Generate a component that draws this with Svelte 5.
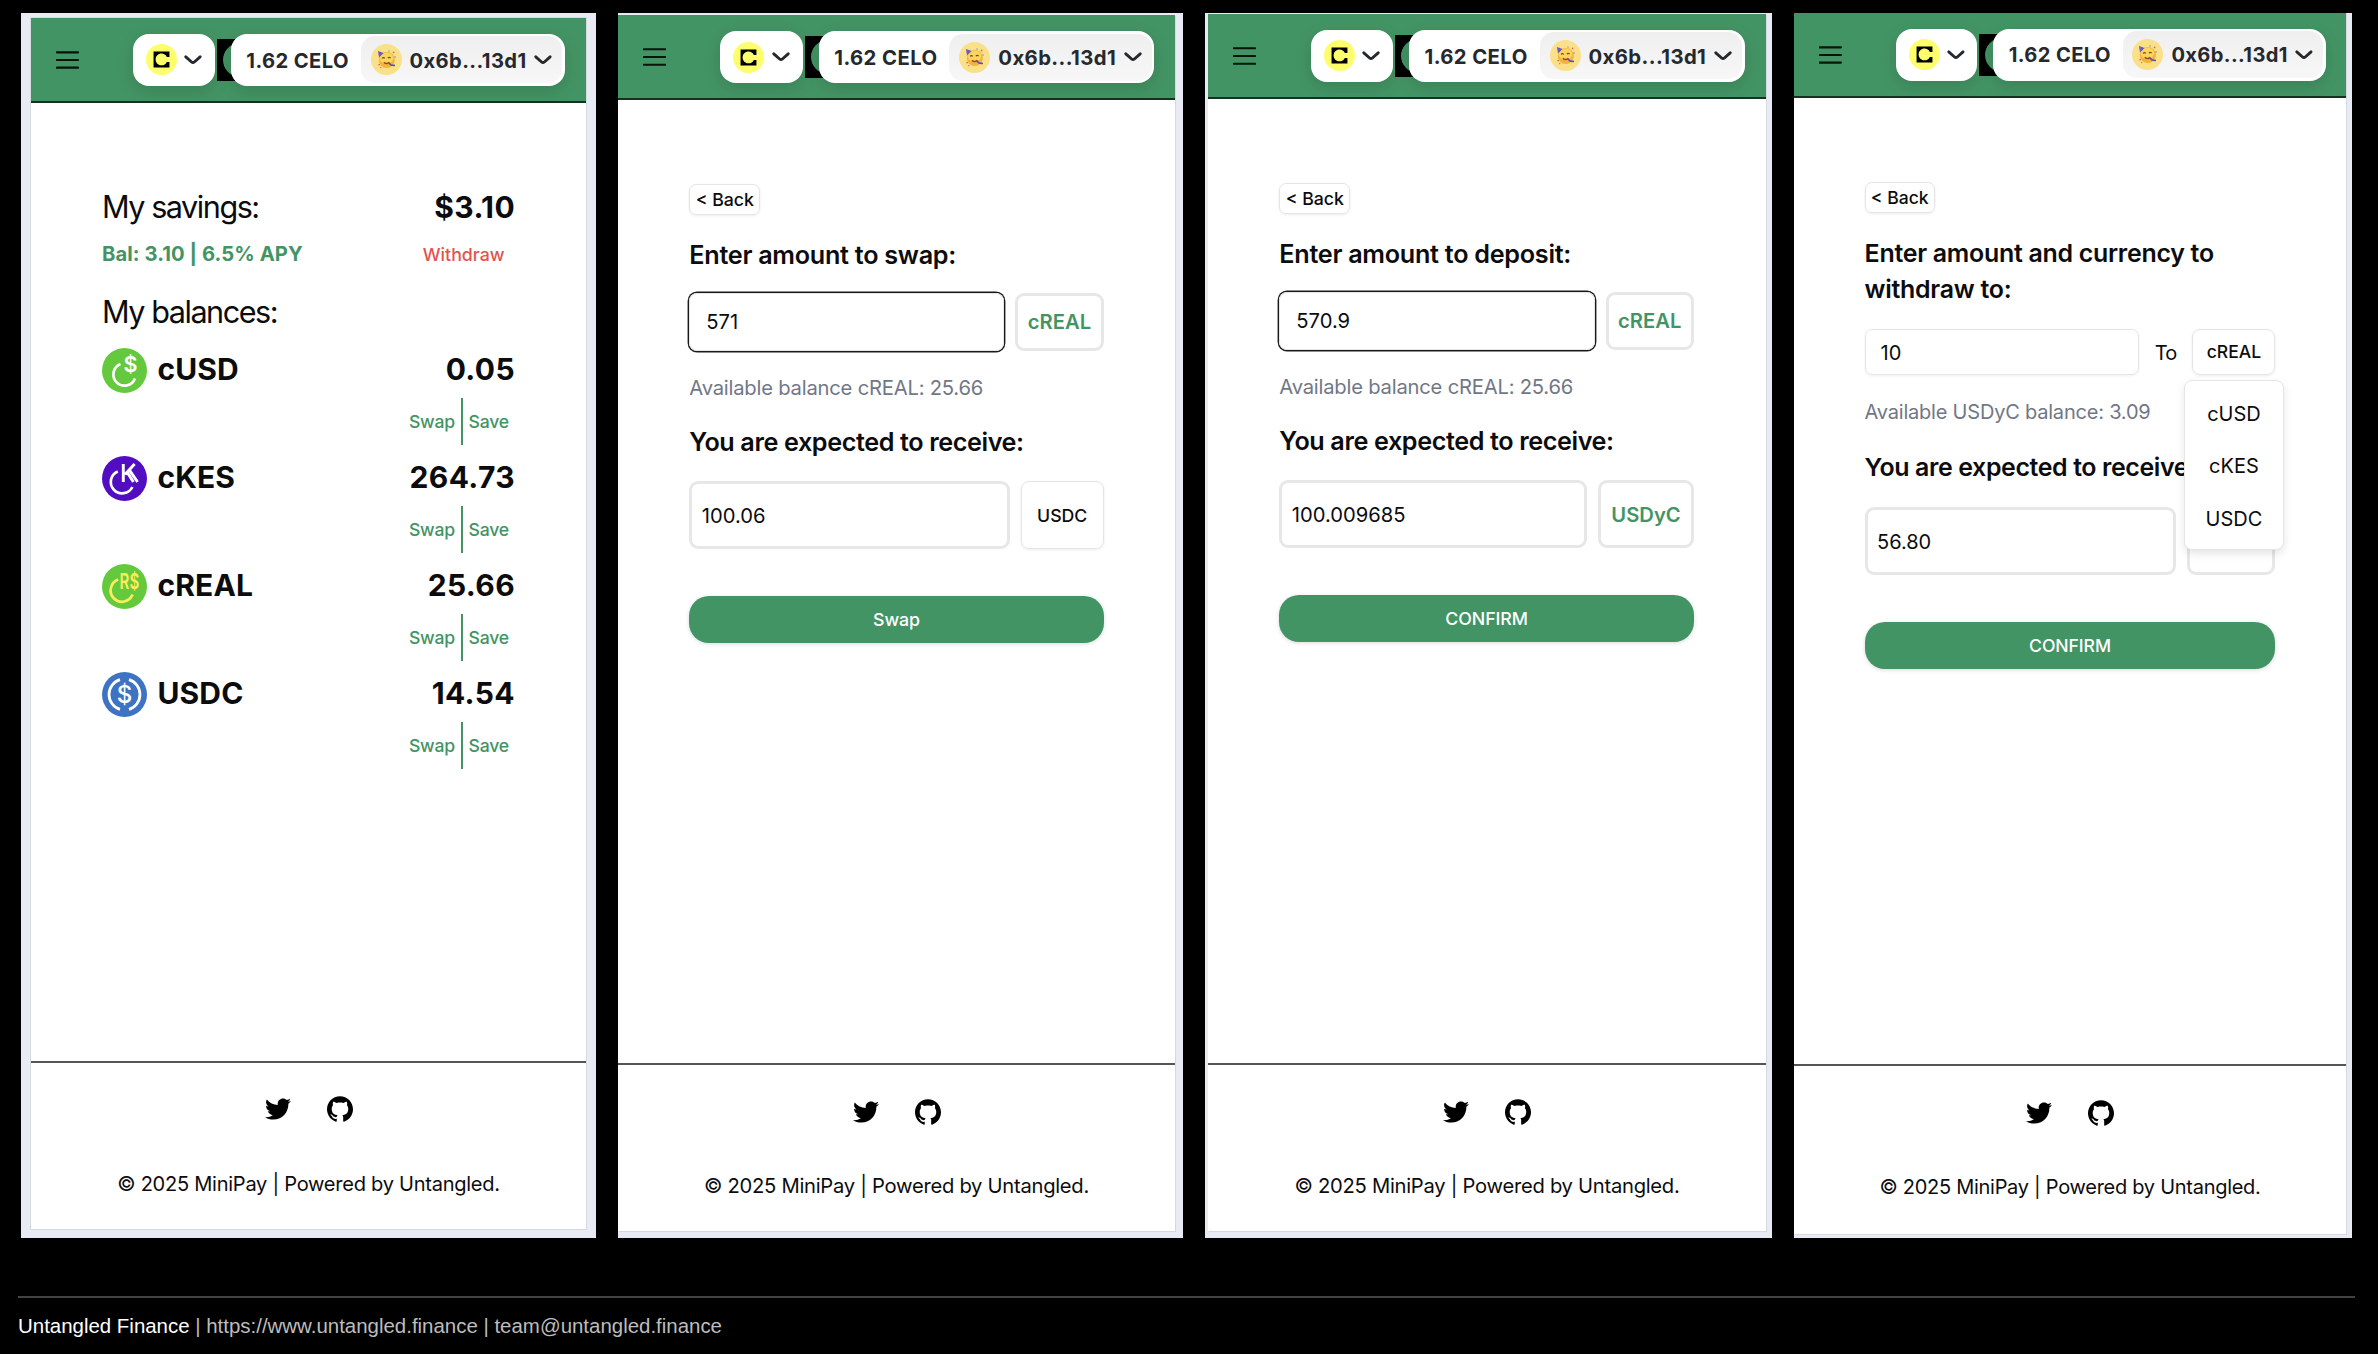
<script>
  const coins = [
    { id: 'cusd', name: 'cUSD', amount: '0.05' },
    { id: 'ckes', name: 'cKES', amount: '264.73' },
    { id: 'creal', name: 'cREAL', amount: '25.66' },
    { id: 'usdc', name: 'USDC', amount: '14.54' },
  ];
  const menu = ['cUSD', 'cKES', 'USDC'];
</script>

{#snippet chevron()}
  <svg class="chev" viewBox="0 0 18 10" aria-hidden="true"><path d="M1.8 1.8 L7.6 7 Q9 8.2 10.4 7 L16.2 1.8" fill="none" stroke="#25292e" stroke-width="2.9" stroke-linecap="round" /></svg>
{/snippet}

{#snippet header()}
  <header class="bar">
    <svg class="burger" viewBox="0 0 23 18" aria-hidden="true"><path d="M.8 1.3H22.2M.8 9H22.2M.8 16.7H22.2" stroke="#06140c" stroke-width="2.1" stroke-linecap="round" /></svg>
    <div class="wallets">
      <div class="pill chain">
        <svg class="celo" viewBox="0 0 48 48" aria-hidden="true">
          <circle cx="24" cy="24" r="24" fill="#fcff6b" />
          <path d="M36.3 11.7H11.7v24.6h24.6v-8.6h-4.1c-1.4 3.1-4.6 5.3-8.2 5.3-5 0-9.1-4.1-9.1-9.1s4.1-9 9.1-9c3.7 0 6.8 2.3 8.3 5.4h4z" />
        </svg>
        {@render chevron()}
      </div>
      <div class="logo-slot"><svg class="logo" viewBox="0 0 42 42" aria-hidden="true"><rect width="42" height="42" /><circle cx="23" cy="21" r="17" fill="#439464" /></svg></div>
      <div class="pill wallet">
        <span>1.62 CELO</span>
        <div class="account">
          <svg class="avatar" viewBox="0 0 31 31" aria-hidden="true">
            <circle cx="15.5" cy="15.5" r="15.5" fill="#fbe08a" />
            <circle cx="15.8" cy="16" r="8" fill="#f3b23c" />
            <ellipse cx="15.4" cy="14.2" rx="6.8" ry="5.6" fill="#fcd65c" />
            <path d="M7 7 12.6 9 8 13.4Z" fill="#6a5bc0" />
            <path d="M11 14.4q1.5-1.6 2.8 0M16.8 14.2q1.4-1.6 2.8 0" fill="none" stroke="#7a4a16" stroke-width="1.1" />
            <path d="M12.8 18.2q2.8 2.6 5.6 0" fill="none" stroke="#a3481e" stroke-width="1.5" />
            <path d="M18.4 19.4q1.6 2.4 4.8 2" fill="none" stroke="#5a52b8" stroke-width="1.8" stroke-linecap="round" />
            <circle cx="22.6" cy="8.4" r=".9" fill="#e0655c" /><circle cx="24" cy="13" r=".8" fill="#6a8fd8" />
            <circle cx="8.2" cy="20.6" r=".9" fill="#e0655c" /><circle cx="18" cy="7" r=".7" fill="#5a9fd0" /><circle cx="9.8" cy="23.6" r=".7" fill="#c0559c" />
          </svg>
          <span>0x6b...13d1</span>
          {@render chevron()}
        </div>
      </div>
    </div>
  </header>
{/snippet}

{#snippet footer()}
  <footer class="foot">
    <div class="social">
      <svg viewBox="0 0 512 512" aria-hidden="true"><path d="M459.37 151.716c.325 4.548.325 9.097.325 13.645 0 138.72-105.583 298.558-298.558 298.558-59.452 0-114.68-17.219-161.137-47.106 8.447.974 16.568 1.299 25.34 1.299 49.055 0 94.213-16.568 130.274-44.832-46.132-.975-84.792-31.188-98.112-72.772 6.498.974 12.995 1.624 19.818 1.624 9.421 0 18.843-1.3 27.614-3.573-48.081-9.747-84.143-51.98-84.143-102.985v-1.299c13.969 7.797 30.214 12.67 47.431 13.319-28.264-18.843-46.781-51.005-46.781-87.391 0-19.492 5.197-37.36 14.294-52.954 51.655 63.675 129.3 105.258 216.365 109.807-1.624-7.797-2.599-15.918-2.599-24.04 0-57.828 46.782-104.934 104.934-104.934 30.213 0 57.502 12.67 76.67 33.137 23.715-4.548 46.456-13.32 66.599-25.34-7.798 24.366-24.366 44.833-46.132 57.827 21.117-2.273 41.584-8.122 60.426-16.243-14.292 20.791-32.161 39.308-52.628 54.253z" /></svg>
      <svg viewBox="0 0 24 24" aria-hidden="true"><path d="M12 .297c-6.63 0-12 5.373-12 12 0 5.303 3.438 9.8 8.205 11.385.6.113.82-.258.82-.577 0-.285-.01-1.04-.015-2.04-3.338.724-4.042-1.61-4.042-1.61C4.422 18.07 3.633 17.7 3.633 17.7c-1.087-.744.084-.729.084-.729 1.205.084 1.838 1.236 1.838 1.236 1.07 1.835 2.809 1.305 3.495.998.108-.776.417-1.305.76-1.605-2.665-.3-5.466-1.332-5.466-5.93 0-1.31.465-2.38 1.235-3.22-.135-.303-.54-1.523.105-3.176 0 0 1.005-.322 3.3 1.23.96-.267 1.98-.399 3-.405 1.02.006 2.04.138 3 .405 2.28-1.552 3.285-1.23 3.285-1.23.645 1.653.24 2.873.12 3.176.765.84 1.23 1.91 1.23 3.22 0 4.61-2.805 5.625-5.475 5.92.42.36.81 1.096.81 2.22 0 1.606-.015 2.896-.015 3.286 0 .315.21.69.825.57C20.565 22.092 24 17.592 24 12.297c0-6.627-5.373-12-12-12" /></svg>
    </div>
    <p class="copy">© 2025 MiniPay | Powered by Untangled.</p>
  </footer>
{/snippet}

{#snippet coinIcon(id)}
  <svg class="coin" viewBox="0 0 45 45" aria-hidden="true">
    {#if id === 'cusd'}
      <circle cx="22.5" cy="22.5" r="22.5" fill="#64c93c" />
      <path d="M18.5 16A11.2 11.2 0 1 0 33 30.5" fill="none" stroke="#fff" stroke-width="2.7" />
      <text x="28.4" y="24.4" text-anchor="middle" font-size="21.5" font-weight="600" fill="#fff">$</text>
    {:else if id === 'ckes'}
      <circle cx="22.5" cy="22.5" r="22.5" fill="#520dc2" />
      <path d="M15.8 15.4A11.4 11.4 0 1 0 30.4 31" fill="none" stroke="#fff" stroke-width="2.7" />
      <path d="M21.3 8V26M32.6 8 23 18.4M24.4 15 31.4 26M27.6 14.4 35.6 26" fill="none" stroke="#fff" stroke-width="2.9" />
    {:else if id === 'creal'}
      <circle cx="22.5" cy="22.5" r="22.5" fill="#64c93c" />
      <path d="M16.2 15.6A11.4 11.4 0 1 0 30.6 30.6" fill="none" stroke="#fcee5a" stroke-width="2.7" />
      <text x="17.6" y="25" textLength="19.6" lengthAdjust="spacingAndGlyphs" font-size="22" font-weight="600" fill="#fcee5a">R$</text>
    {:else}
      <circle cx="22.5" cy="22.5" r="22.5" fill="#3e73c4" />
      <path d="M18 7.6A15.6 15.6 0 0 0 18 37.4M27 7.6A15.6 15.6 0 0 1 27 37.4" fill="none" stroke="#fff" stroke-width="2.8" />
      <text x="22.5" y="31" text-anchor="middle" font-size="24" font-weight="500" fill="#fff">$</text>
    {/if}
  </svg>
{/snippet}

<div class="stage">
  <div class="phones">
    <section class="phone p1">
      <div class="screen">
        {@render header()}
        <main class="home">
          <div class="line savings"><span class="title">My savings:</span><span class="big">$3.10</span></div>
          <div class="line apy"><span class="bal">Bal: 3.10 | 6.5% APY</span><span class="withdraw">Withdraw</span></div>
          <div class="line balances"><span class="title">My balances:</span></div>
          {#each coins as c}
            <div class="line coinrow">
              <div class="coinname">{@render coinIcon(c.id)}<span class="big">{c.name}</span></div>
              <span class="big">{c.amount}</span>
            </div>
            <div class="actions"><span class="swap">Swap</span><span class="save">Save</span></div>
          {/each}
        </main>
        {@render footer()}
      </div>
    </section>

    <section class="phone p2">
      <div class="screen">
        {@render header()}
        <main class="form">
          <span class="back">&lt; Back</span>
          <h2>Enter amount to swap:</h2>
          <div class="row"><div class="field focus">571</div><div class="tag green">cREAL</div></div>
          <p class="hint">Available balance cREAL: 25.66</p>
          <h2>You are expected to receive:</h2>
          <div class="row out"><div class="field thick">100.06</div><div class="tag thin">USDC</div></div>
          <div class="cta">Swap</div>
        </main>
        {@render footer()}
      </div>
    </section>

    <section class="phone p3">
      <div class="screen">
        {@render header()}
        <main class="form">
          <span class="back">&lt; Back</span>
          <h2>Enter amount to deposit:</h2>
          <div class="row"><div class="field focus">570.9</div><div class="tag green">cREAL</div></div>
          <p class="hint">Available balance cREAL: 25.66</p>
          <h2>You are expected to receive:</h2>
          <div class="row out"><div class="field thick">100.009685</div><div class="tag green">USDyC</div></div>
          <div class="cta">CONFIRM</div>
        </main>
        {@render footer()}
      </div>
    </section>

    <section class="phone p4">
      <div class="screen">
        {@render header()}
        <main class="form">
          <span class="back">&lt; Back</span>
          <h2>Enter amount and currency to<br />withdraw to:</h2>
          <div class="row short">
            <div class="field slim">10</div>
            <span class="to">To</span>
            <div class="tag thin select">
              cREAL
              <ul class="menu">{#each menu as m}<li>{m}</li>{/each}</ul>
            </div>
          </div>
          <p class="hint">Available USDyC balance: 3.09</p>
          <h2>You are expected to receive:</h2>
          <div class="row out"><div class="field thick">56.80</div><div class="tag green"></div></div>
          <div class="cta">CONFIRM</div>
        </main>
        {@render footer()}
      </div>
    </section>
  </div>
  <div class="credit"><b>Untangled Finance</b> | https://www.untangled.finance | team@untangled.finance</div>
</div>

<style>
  :global(body) { background: #000; }
  * { box-sizing: border-box; margin: 0; padding: 0; }
  .stage { width: 2378px; height: 1354px; background: #000; font-family: Inter, "Liberation Sans", sans-serif; color: #0c0c0e; overflow: hidden; white-space: nowrap; }
  .phones { display: flex; gap: 22px; padding: 13px 0 0 21px; }
  .phone { height: 1225px; background: #e8ebf4; display: flex; --u: 1px; }
  .p1 { width: 575px; padding: 5px 10px 9px; --u: .994px; }
  .p2 { width: 565px; padding: 2px 8px 7px 0; }
  .p3 { width: 567px; padding: 1px 6px 7px 3px; }
  .p4 { width: 558px; padding: 0 6px 4px 0; --u: .99px; }
  .screen { flex: 1; background: #fff; display: flex; flex-direction: column; box-shadow: 0 0 0 1px #d6d9e0; }
  .p2 .screen, .p3 .screen, .p4 .screen { box-shadow: 1px 1px 0 #d6d9e0; }

  .bar { height: 85px; background: #439464; border-bottom: 2px solid #17301f; display: flex; align-items: center; justify-content: space-between; padding: 0 calc(var(--u) * 20.6) 0 calc(var(--u) * 25); }
  .p1 .bar { padding-right: 21.5px; }
  .p2 .bar { padding-top: 1px; }
  .p3 .bar { padding-right: 21.4px; }
  .burger { width: calc(var(--u) * 23); height: 18px; }
  .wallets { display: flex; align-items: center; }
  .pill { position: relative; height: 52px; border-radius: 16px; background: #fff; display: flex; align-items: center; box-shadow: 0 5px 16px rgba(0, 0, 0, .13); }
  .chain { width: calc(var(--u) * 82.5); padding: 0 calc(var(--u) * 13); justify-content: space-between; }
  .celo { width: 31px; height: 31px; }
  .chev { width: calc(var(--u) * 18); height: 10px; }
  .logo-slot { width: 16px; height: 42px; padding-left: 2px; }
  .logo { width: 42px; height: 42px; display: block; }
  .wallet { width: calc(var(--u) * 335.5); padding: 0 calc(var(--u) * 2.6) 0 calc(var(--u) * 15.4); justify-content: space-between; color: #25292e; font-weight: 700; font-size: calc(var(--u) * 20.3); letter-spacing: .02em; }
  .wallet span { padding-top: 1px; }
  .account { width: calc(var(--u) * 202.5); height: 47px; border-radius: 14px; background: linear-gradient(#efefef, #f7f7f7); display: flex; align-items: center; padding: 0 calc(var(--u) * 10); }
  .account .chev { margin-left: auto; }
  .avatar { width: 31px; height: 31px; margin-right: calc(var(--u) * 8); }

  .foot { margin-top: auto; height: 168px; border-top: 2px solid #555; }
  .p4 .foot { height: 170px; }
  .social { display: flex; justify-content: center; align-items: center; gap: 36px; height: 93px; }
  .social svg { width: 26px; height: 26px; }
  .p1 .social { height: 92px; }
  .copy { text-align: center; line-height: 30px; margin-top: 12.5px; font-size: calc(var(--u) * 20.2); letter-spacing: -.0135em; }
  .p1 .copy { margin-top: 13.5px; }

  .home { padding: 86px 71px 0; }
  .line { display: flex; justify-content: space-between; align-items: center; }
  .title { font-size: 30.6px; letter-spacing: -.048em; margin-top: -2px; }
  .big { font-size: 30px; font-weight: 700; letter-spacing: .012em; }
  .savings { height: 36px; }
  .apy { height: 47px; margin-top: 5px; }
  .bal { font-size: 20.2px; font-weight: 650; color: #439464; letter-spacing: .004em; }
  .withdraw { font-size: 17.8px; font-weight: 500; color: #e2534f; padding: 1px 10.5px 0 0; }
  .balances { height: 36px; margin-top: 17px; }
  .coinrow { height: 45px; margin-top: 18px; }
  .coinrow .big { margin-top: -3px; }
  .coinname { display: flex; align-items: center; gap: 10.5px; }
  .coinname .big { letter-spacing: .004em; }
  .coin { width: 45px; height: 45px; }
  .actions { display: flex; justify-content: flex-end; align-items: center; height: 47px; margin: 5px 0 -7px; color: #439464; font-size: 17.6px; font-weight: 500; letter-spacing: -.01em; }
  .swap { border-right: 2px solid #439464; padding-right: 6px; line-height: 47px; }
  .save { padding: 0 6px 0 5.5px; }

  .form { padding: 84px calc(var(--u) * 71.3) 0; display: flex; flex-direction: column; align-items: stretch; }
  .p3 .form { padding-right: 72px; }
  .back { align-self: flex-start; width: calc(var(--u) * 71); height: 31px; line-height: 29px; text-align: center; border: 1.3px solid #e5e5e5; border-radius: 7px; font-size: calc(var(--u) * 17.7); font-weight: 500; box-shadow: 0 1px 3px rgba(0, 0, 0, .08); }
  h2 { font-size: calc(var(--u) * 25.2); line-height: calc(var(--u) * 36.4); font-weight: 600; margin-top: 21.5px; letter-spacing: -.011em; }
  .row { display: flex; height: 57.4px; margin-top: 20.3px; gap: calc(var(--u) * 10.8); align-items: stretch; }
  .row.out { height: 68.3px; }
  .row.short { height: 46.4px; gap: 16px; margin-top: 22px; }
  .field { flex: 1; border-radius: 9px; display: flex; align-items: center; font-size: calc(var(--u) * 20.2); }
  .focus { border: 1px solid #e5e5e5; box-shadow: 0 0 0 1.4px #1a1a1c; padding: 0 0 0 16px; border-radius: 8px; }
  .thick { border: 3px solid #e7e7e8; padding: 2px 0 0 9.5px; }
  .slim { border: 1.3px solid #e5e5e5; padding: 2px 0 0 15px; box-shadow: 0 1px 3px rgba(0, 0, 0, .06); border-radius: 7px; }
  .to { font-size: 20px; align-self: center; letter-spacing: -.04em; padding-top: 2px; }
  .tag { display: flex; align-items: center; justify-content: center; border-radius: 9px; border: 3px solid #e7e7e8; }
  .tag.green { color: #439464; font-weight: 600; font-size: calc(var(--u) * 20.2); width: 88.5px; }
  .out .tag { padding-top: 1px; }
  .p3 .out .tag { width: 96px; }
  .tag.thin { width: 83px; border: 1.3px solid #e5e5e5; font-weight: 500; font-size: calc(var(--u) * 17.7); border-radius: 8px; box-shadow: 0 1px 3px rgba(0, 0, 0, .08); }
  .hint { margin-top: 21.3px; line-height: 31px; font-size: calc(var(--u) * 20.2); color: #717786; letter-spacing: -.01em; }
  .hint + h2 { margin-top: 21px; letter-spacing: -.0155em; }
  .p4 .hint { margin-top: 22.4px; }
  .p4 .row.out { margin-top: 21.4px; }
  .cta { margin-top: 46.7px; height: 47px; border-radius: 20px; background: #439464; color: #fff; display: flex; align-items: center; justify-content: center; font-size: calc(var(--u) * 17.8); font-weight: 500; box-shadow: 0 1px 4px rgba(0, 0, 0, .15); letter-spacing: -.005em; }
  .select { position: relative; }
  .menu { position: absolute; z-index: 2; top: 50.5px; right: -9.5px; width: 100px; height: 170px; list-style: none; background: #fff; border: 1.3px solid #e5e5e5; border-radius: 8px; box-shadow: 0 4px 8px rgba(0, 0, 0, .1); padding-top: 7px; }
  .menu li { line-height: 52.3px; text-align: center; font-size: 20px; font-weight: 400; }

  .credit { margin: 58px 23px 0 18px; border-top: 2px solid #424242; padding-top: 12.5px; font: 20.45px/30px "Liberation Sans", Arial, sans-serif; color: #bdbdbd; }
  .credit b { color: #fff; font-weight: 400; }
</style>
